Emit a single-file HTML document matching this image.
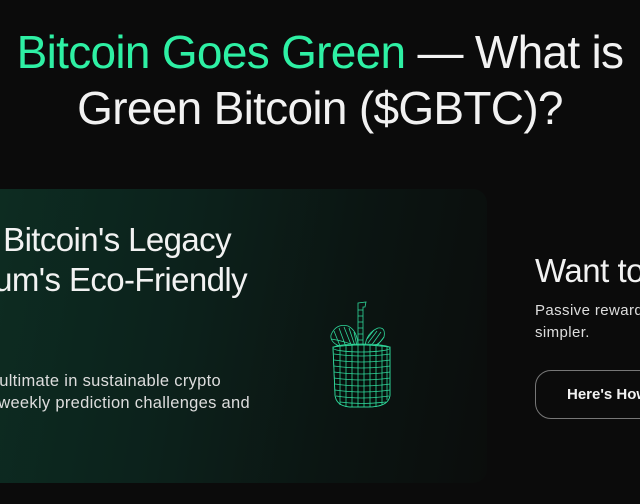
<!DOCTYPE html>
<html><head><style>
*{margin:0;padding:0;box-sizing:border-box}
html,body{width:640px;height:504px;overflow:hidden}
body{background:#0b0b0b;position:relative;font-family:"Liberation Sans",sans-serif;color:#f2f2f2}
.t{position:absolute;left:0;width:640px;text-align:center;font-size:46px;white-space:nowrap;letter-spacing:-0.7px}
.g{color:#2ef0a4}
.card{position:absolute;left:-20px;top:189px;width:507px;height:294px;border-radius:14px;overflow:hidden;
background:linear-gradient(100deg,#0d2d22 0%,#0c211b 40%,#0b1512 70%,#0b0d0c 100%)}
.r{position:absolute;white-space:nowrap;text-align:right}
.wrap{position:absolute;left:0;top:0;width:640px;height:504px;overflow:hidden}
</style></head><body><div class="wrap">
<div class="t" style="top:25px"><span class="g">Bitcoin Goes Green</span> — What is</div>
<div class="t" style="top:81px">Green Bitcoin ($GBTC)?</div>
<div class="card">
 <div class="r" style="right:256px;top:32px;font-size:33px;letter-spacing:-0.6px">Bitcoin's Legacy</div>
 <div class="r" style="right:240px;top:72px;font-size:33px;letter-spacing:-0.6px">Ethereum's Eco-Friendly</div>
 <div class="r" style="right:266px;top:183px;font-size:16.5px;color:#ddd;letter-spacing:0.3px">the ultimate in sustainable crypto</div>
 <div class="r" style="right:237px;top:205px;font-size:16.5px;color:#ddd;letter-spacing:0.3px">with weekly prediction challenges and</div>
 <svg style="position:absolute;left:348px;top:112px" width="68" height="110" viewBox="0 0 68 110" fill="none" stroke="#2fd79a" stroke-width="0.8">
  <path d="M30 2 L38 1 L37 6 L35 6 L35 44 L30 44 Z"/>
  <path d="M30 9h5M30 15h5M30 21h5M30 27h5M30 33h5M30 39h5"/>
  <path d="M3 34 Q8 22 20 25 Q30 30 30 46 Q18 48 9 44 Q2 40 3 34Z"/>
  <path d="M6 30l6 15M11 27l7 19M16 26l8 20M21 27l6 18M26 31l3 14M3 38q14 2 27 8"/>
  <path d="M37 46 Q38 32 50 27 Q58 26 56 36 Q50 46 37 47Z"/>
  <path d="M40 42l9-12M43 45l10-14M39 38l7-9M48 46l8-10"/>
  <path d="M5 46 Q33 42 62 46 L62 94 Q61 106 40 106 L22 106 Q8 105 7 94 Z" fill="#06100c"/>
  <path d="M5 46 Q33 42 62 46 L62 94 Q61 106 40 106 L22 106 Q8 105 7 94 Z"/>
  <path d="M6 53q28 4 56 0M6 59q28 4 56 0M6 65q28 4 56 0M6 71q28 4 56 0M6 77q28 4 56 0M7 83q27 4 55 0M7 89q27 4 55 0M8 95q26 4 53 0M12 101q22 3 46 0"/>
  <path d="M12 45v59M18 44v62M24 44v62M30 43v63M36 43v63M42 43v63M48 44v62M54 44v60M59 45v54"/>
  <ellipse cx="33.5" cy="47" rx="28.5" ry="4"/>
 </svg>
</div>
<div class="r" style="left:535px;top:252px;font-size:33px;text-align:left;letter-spacing:-0.5px">Want to earn</div>
<div class="r" style="left:535px;top:302px;font-size:15px;text-align:left;color:#ddd;letter-spacing:0.4px">Passive rewards made</div>
<div class="r" style="left:535px;top:324px;font-size:15px;text-align:left;color:#ddd;letter-spacing:0.4px">simpler.</div>
<div style="position:absolute;left:535px;top:370px;width:200px;height:49px;border:1px solid #777;border-radius:16px"></div>
<div class="r" style="left:567px;top:386px;font-size:15px;font-weight:bold;text-align:left">Here's How</div>
</div></body></html>
